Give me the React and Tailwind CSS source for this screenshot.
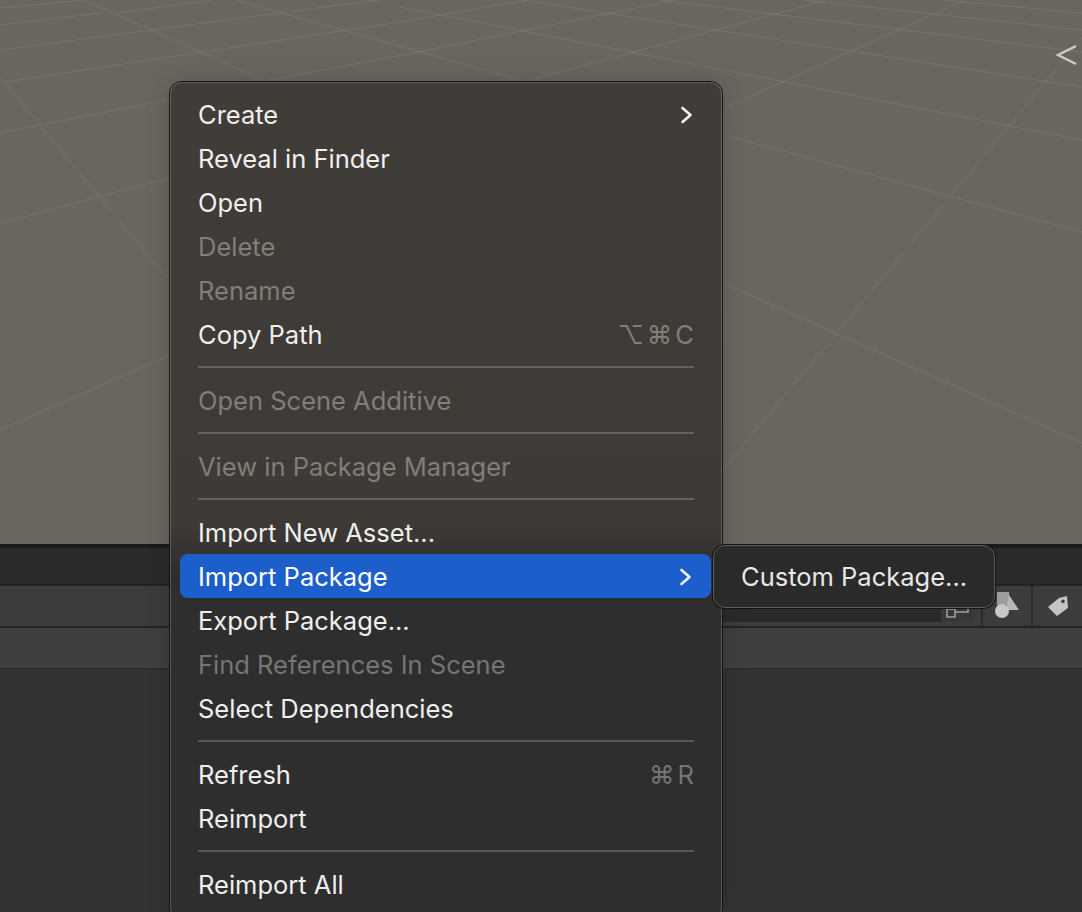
const gridLines = [
  [728, 136, 1082, 232],
  [400, 7, 1082, 140],
  [523, 0, 1082, 87],
  [660, 0, 1082, 52],
  [803, 0, 1082, 30],
  [942, 0, 1082, 13],
  [727, 107, 965, 0],
  [530, 80, 827, 0],
  [418, 52, 676, 0],
  [400, 22, 527, 0],
  [723, 470, 1082, 38],
  [723, 283, 1082, 443],
  [84, 0, 263, 80],
  [235, 0, 520, 80],
  [0, 50, 400, -3],
  [5, 82, 400, 22],
  [270, 80, 418, 52],
  [0, 133, 167, 100],
  [0, 223, 170, 178],
  [0, 77, 167, 278],
  [0, 430, 168, 356],
  [0, 25, 100, 13],
  [0, 8, 83, 0],
  [117, 13, 213, 0],
];

const menu = [
  { label: "Create", arrow: true },
  { label: "Reveal in Finder" },
  { label: "Open" },
  { label: "Delete", disabled: true },
  { label: "Rename", disabled: true },
  { label: "Copy Path", keys: ["⌥", "⌘", "C"] },
  { sep: true },
  { label: "Open Scene Additive", disabled: true },
  { sep: true },
  { label: "View in Package Manager", disabled: true },
  { sep: true },
  { label: "Import New Asset..." },
  { label: "Import Package", arrow: true, active: true },
  { label: "Export Package..." },
  { label: "Find References In Scene", disabled: true },
  { label: "Select Dependencies" },
  { sep: true },
  { label: "Refresh", keys: ["⌘", "R"] },
  { label: "Reimport" },
  { sep: true },
  { label: "Reimport All" },
];

function Chevron() {
  return (
    <svg width="14" height="18" viewBox="0 0 14 18" fill="none" className="block">
      <path d="M2.5 2 L10.5 9 L2.5 16" stroke="#f2f2f2" strokeWidth="2.6" strokeLinecap="round" strokeLinejoin="round" />
    </svg>
  );
}

function MenuRow({ item }) {
  if (item.sep) {
    return (
      <div className="h-[22px] pt-[9px] pl-[27px] pr-[27px]">
        <div className="h-[2px] bg-white/20" />
      </div>
    );
  }
  const tone = item.disabled ? "text-white/35" : "text-[#efefef]";
  const box = item.active
    ? "-mt-px mb-px ml-[9px] mr-[10px] pt-[2px] pr-[18px] bg-[#1c5ecb] text-white"
    : "mx-[9px] pr-[18px]";
  return (
    <div className={`flex h-[44px] items-center justify-between rounded-[8px] pl-[18px] ${tone} ${box}`}>
      <span>{item.label}</span>
      {item.arrow && <Chevron />}
      {item.keys && (
        <span className="flex items-center gap-[3px] text-white/35">
          {item.keys.map((k) => (
            <span key={k}>{k}</span>
          ))}
        </span>
      )}
    </div>
  );
}

export default function App() {
  return (
    <div className="relative flex h-[912px] w-[1082px] flex-col overflow-hidden bg-[#333333] text-[25.5px] leading-[30px] [font-family:Inter,'DejaVu_Sans',sans-serif]">
      <div className="relative h-[544px] shrink-0 bg-[#6a655e]">
        <svg className="absolute inset-0" width="1082" height="544" viewBox="0 0 1082 544">
          {gridLines.map(([a, b, c, d], i) => (
            <line key={i} x1={a} y1={b} x2={c} y2={d} stroke="#ffffff" strokeOpacity="0.09" strokeWidth="1" />
          ))}
          <path d="M1076 46 L1058 55 L1076 64" fill="none" stroke="#cfcdca" strokeWidth="2.4" />
        </svg>
      </div>
      <div className="h-[4px] shrink-0 bg-[#1c1a18]" />
      <div className="h-[36px] shrink-0 bg-[#2a2a2a]" />
      <div className="h-[2px] shrink-0 bg-[#232323]" />
      <div className="flex h-[40px] shrink-0 justify-end bg-[#3c3c3c]">
        <div className="flex h-[36px] w-[280px] justify-end rounded-br-[8px] bg-[#2a2a2a]">
          <div className="flex w-[34px] items-end justify-center rounded-br-[8px] bg-[#383838] pb-[4px]">
            <svg width="24" height="12" viewBox="0 0 24 12" fill="none">
              <rect x="1" y="3" width="8" height="8" stroke="#a0a0a0" strokeWidth="1.5" />
              <path d="M9 6 H22 V1" stroke="#a0a0a0" strokeWidth="1.5" />
            </svg>
          </div>
        </div>
        <div className="ml-[6px] flex h-full w-[52px] items-center justify-center border-x-2 border-[#2b2b2b]">
          <svg width="28" height="28" viewBox="0 0 28 28">
            <rect x="4" y="0" width="12" height="13" fill="#9c9c9c" />
            <path d="M16 3 L26 18 L13 18 Z" fill="#b8b8b8" />
            <circle cx="9" cy="19" r="7" fill="#c8c8c8" />
          </svg>
        </div>
        <div className="flex h-full w-[49px] items-center justify-center">
          <svg width="24" height="24" viewBox="0 0 24 24">
            <path
              fillRule="evenodd"
              d="M21 2 L22 14 L11 22 L2 13 L13 4 Z M17 5.5 a1.8 1.8 0 1 0 0.01 0 Z"
              fill="#c4c4c4"
            />
          </svg>
        </div>
      </div>
      <div className="h-[2px] shrink-0 bg-[#232323]" />
      <div className="h-[40px] shrink-0 bg-[#3f3f3f]" />
      <div className="h-[1px] shrink-0 bg-[#2a2a2a]" />
      <div className="flex-1 bg-[#333333]" />

      <div className="absolute left-[170px] top-[82px] w-[552px] rounded-[12px] border border-white/20 bg-[linear-gradient(180deg,#403c38_0px,#3e3a36_440px,#2e2e2e_490px)] pb-[11px] pt-[10px] shadow-[0_0_0_1px_#161412,0_0_24px_rgba(0,0,0,0.18)]">
        {menu.map((item, i) => (
          <MenuRow key={i} item={item} />
        ))}
      </div>

      <div className="absolute left-[713px] top-[545px] flex h-[63px] w-[282px] items-center rounded-[12px] border border-[#5c5c5c] bg-[#2a2a2a] pl-[27px] text-[#e8e8e8] shadow-[0_0_0_1px_#141414]">
        Custom Package...
      </div>
    </div>
  );
}
